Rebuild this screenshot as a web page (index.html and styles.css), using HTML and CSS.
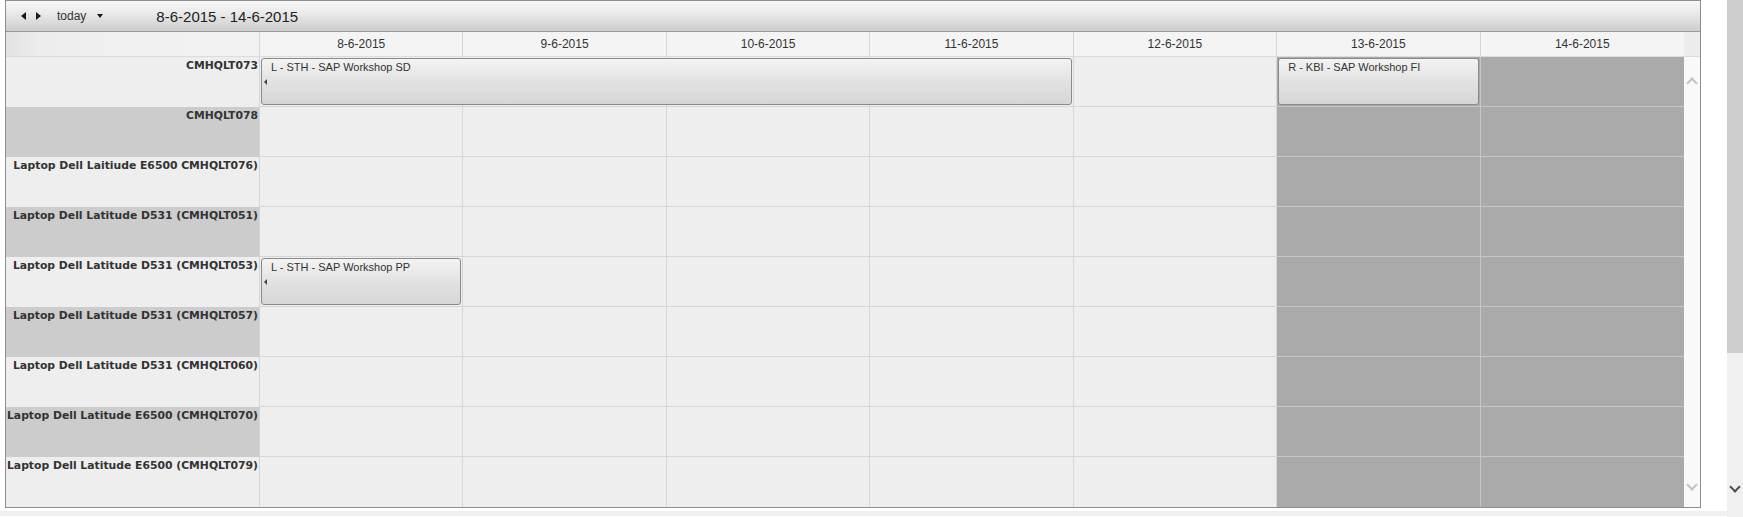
FILE: index.html
```html
<!DOCTYPE html>
<html lang="en">

<head>
    <meta charset="UTF-8">
    <title>Resource Scheduler</title>
    <link rel="stylesheet" href="styles.css">
</head>

<body>
    <div class="page">
        <div class="main">
            <div class="scheduler">
                <div class="toolbar">
                    <span class="nav">
                        <span class="arrow-left"></span>
                        <span class="arrow-right"></span>
                    </span>
                    <span class="today">today</span>
                    <span class="caret"></span>
                    <span class="range">8-6-2015 - 14-6-2015</span>
                </div>

                <div class="header">
                    <div class="corner"></div>
                    <div class="day">8-6-2015</div>
                    <div class="day">9-6-2015</div>
                    <div class="day">10-6-2015</div>
                    <div class="day">11-6-2015</div>
                    <div class="day">12-6-2015</div>
                    <div class="day">13-6-2015</div>
                    <div class="day">14-6-2015</div>
                    <div class="bar-head"></div>
                </div>

                <div class="body">
                    <div class="rows" id="rows"></div>
                    <div class="vbar">
                        <span class="chev up"></span>
                        <span class="chev down"></span>
                    </div>
                </div>
            </div>
            <div class="hstrip"></div>
        </div>

        <div class="pagebar">
            <div class="thumb"></div>
            <span class="pagebar-down"></span>
        </div>
    </div>

    <script>
        const resources = [
            'CMHQLT073',
            'CMHQLT078',
            'Laptop Dell Laitiude E6500 CMHQLT076)',
            'Laptop Dell Latitude D531 (CMHQLT051)',
            'Laptop Dell Latitude D531 (CMHQLT053)',
            'Laptop Dell Latitude D531 (CMHQLT057)',
            'Laptop Dell Latitude D531 (CMHQLT060)',
            'Laptop Dell Latitude E6500 (CMHQLT070)',
            'Laptop Dell Latitude E6500 (CMHQLT079)'
        ];

        // row index, first day (1-7), number of days, title
        const events = [
            { row: 0, day: 1, span: 4, title: 'L - STH - SAP Workshop SD', arrow: true },
            { row: 0, day: 6, span: 1, title: 'R - KBI - SAP Workshop FI', arrow: false },
            { row: 4, day: 1, span: 1, title: 'L - STH - SAP Workshop PP', arrow: true }
        ];

        const rowsElem = document.getElementById('rows');

        resources.forEach((name, i) => {
            const row = document.createElement('div');
            row.className = 'row' + (i % 2 ? ' alt' : '');

            const label = document.createElement('div');
            label.className = 'label';
            label.textContent = name;
            row.appendChild(label);

            const track = document.createElement('div');
            track.className = 'track';
            for (let d = 0; d < 7; d++) {
                const cell = document.createElement('div');
                cell.className = 'cell' + (d >= 5 ? ' weekend' : '');
                track.appendChild(cell);
            }

            const layer = document.createElement('div');
            layer.className = 'events';
            events.filter(ev => ev.row === i).forEach(ev => {
                const box = document.createElement('div');
                box.className = 'event';
                box.style.gridColumn = ev.day + ' / span ' + ev.span;
                box.innerHTML = '<span class="event-title"></span>' +
                    (ev.arrow ? '<span class="event-arrow"></span>' : '');
                box.querySelector('.event-title').textContent = ev.title;
                layer.appendChild(box);
            });
            track.appendChild(layer);

            row.appendChild(track);
            rowsElem.appendChild(row);
        });
    </script>
</body>

</html>
```

FILE: styles.css
```css
body,
html {
    margin: 0;
    padding: 0;
    background: #fff;
    font-family: 'Liberation Sans', Arial, sans-serif;
    color: #333;
}

.page {
    display: flex;
    height: 517px;
    overflow: hidden;
}

.main {
    flex: 1;
    display: flex;
    flex-direction: column;
}

.scheduler {
    margin-left: 5px;
    width: 1696px;
    box-sizing: border-box;
    border: 1px solid #8e8e8e;
    display: flex;
    flex-direction: column;
}

.hstrip {
    margin-top: 3px;
    height: 5px;
    background: #f0f0f0;
}

/* toolbar */

.toolbar {
    height: 30px;
    border-bottom: 1px solid #9a9a9a;
    background: linear-gradient(#f7f7f7, #ececec 35%, #cdcdcd);
    display: flex;
    align-items: center;
}

.nav {
    display: flex;
    gap: 10px;
    margin-left: 15px;
}

.arrow-left {
    width: 0;
    height: 0;
    border-top: 4px solid transparent;
    border-bottom: 4px solid transparent;
    border-right: 5px solid #1a1a1a;
}

.arrow-right {
    width: 0;
    height: 0;
    border-top: 4px solid transparent;
    border-bottom: 4px solid transparent;
    border-left: 5px solid #1a1a1a;
}

.today {
    margin-left: 16px;
    font-size: 12px;
    color: #333;
}

.caret {
    margin-left: 11px;
    width: 0;
    height: 0;
    border-left: 3.5px solid transparent;
    border-right: 3.5px solid transparent;
    border-top: 4px solid #1a1a1a;
}

.range {
    margin-left: 53px;
    font-size: 15px;
    color: #222;
}

/* header */

.header {
    display: grid;
    grid-template-columns: 254px repeat(7, 1fr) 16px;
    height: 25px;
    box-sizing: border-box;
    border-bottom: 1px solid #dcdcdc;
    background: #f4f4f4;
}

.corner {
    border-right: 1px solid #d6d6d6;
    background: linear-gradient(90deg, #e2e2e2, #ececec 12%, #f0f0f0 40%, #f2f2f2);
}

.day {
    border-right: 1px solid #d6d6d6;
    font-size: 12px;
    text-align: center;
    line-height: 24px;
    color: #333;
}

.day:nth-child(8) {
    border-right: none;
}

.bar-head {
    background: #ececec;
}

/* body */

.body {
    flex: 1;
    display: flex;
}

.rows {
    flex: 1;
}

.row {
    display: grid;
    grid-template-columns: 254px 1fr;
    height: 50px;
}

.label {
    box-sizing: border-box;
    border-right: 1px solid #d6d6d6;
    background: #eeeeee;
    font-family: 'DejaVu Sans', Verdana, sans-serif;
    font-size: 10.8px;
    font-weight: bold;
    text-align: right;
    padding: 2px 1px 0 0;
    white-space: nowrap;
    color: #333;
}

.row.alt .label {
    background: #cccccc;
}

.track {
    position: relative;
    display: grid;
    grid-template-columns: repeat(7, 1fr);
}

.cell {
    background: #eeeeee;
    border-right: 1px solid #d6d6d6;
    border-bottom: 1px solid #d6d6d6;
}

.cell.weekend {
    background: #aaaaaa;
    border-color: #c6c6c6;
}

.cell:nth-child(7) {
    border-right: none;
}

.row:last-child .cell,
.row:last-child .label {
    border-bottom: none;
}

.events {
    position: absolute;
    inset: 0;
    display: grid;
    grid-template-columns: repeat(7, 1fr);
}

.event {
    position: relative;
    margin: 1px 2px 2px 1px;
    border: 1px solid #8a8a8a;
    border-radius: 3px;
    background: linear-gradient(#f3f3f3, #e2e2e2 50%, #d6d6d6);
    font-size: 11px;
    color: #333;
}

.event-title {
    display: block;
    padding: 2px 0 0 9px;
}

.event-arrow {
    position: absolute;
    left: 2px;
    top: 20px;
    width: 0;
    height: 0;
    border-top: 3px solid transparent;
    border-bottom: 3px solid transparent;
    border-right: 3px solid #444;
}

/* scheduler scrollbar */

.vbar {
    width: 16px;
    background: #f9f9f9;
    display: flex;
    flex-direction: column;
    justify-content: space-between;
    align-items: center;
    padding: 18px 0 18px;
}

.chev {
    width: 6px;
    height: 6px;
    border-left: 2px solid #c4c4c4;
    border-top: 2px solid #c4c4c4;
}

.chev.up {
    transform: rotate(45deg);
    margin-top: 4px;
}

.chev.down {
    transform: rotate(225deg);
}

/* page scrollbar */

.pagebar {
    width: 16px;
    background: #f0f0f0;
    display: flex;
    flex-direction: column;
    align-items: center;
}

.thumb {
    width: 16px;
    height: 353px;
    background: #cdcdcd;
}

.pagebar-down {
    margin-top: 130px;
    width: 6px;
    height: 6px;
    border-right: 2px solid #505050;
    border-bottom: 2px solid #505050;
    transform: rotate(45deg);
}
```
